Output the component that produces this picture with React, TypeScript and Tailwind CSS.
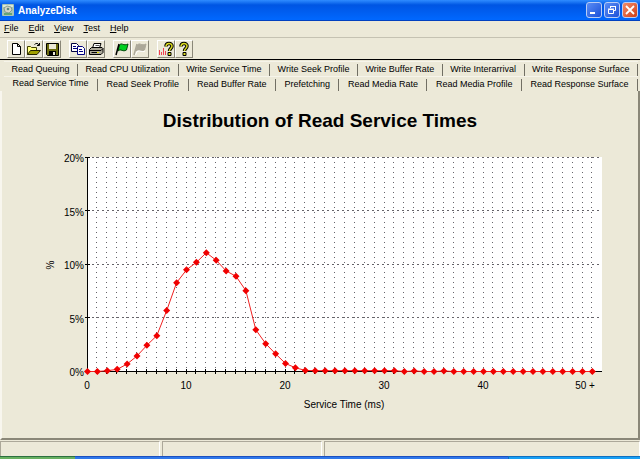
import type { ReactNode } from 'react'
import clsx from 'clsx'

const MENUS = ['File', 'Edit', 'View', 'Test', 'Help']

const BACK_TABS = [
  'Read Queuing',
  'Read CPU Utilization',
  'Write Service Time',
  'Write Seek Profile',
  'Write Buffer Rate',
  'Write Interarrival',
  'Write Response Surface',
]

const FRONT_TABS = [
  'Read Service Time',
  'Read Seek Profile',
  'Read Buffer Rate',
  'Prefetching',
  'Read Media Rate',
  'Read Media Profile',
  'Read Response Surface',
]

// Share of reads (%) per service time bucket, 1 ms each; the last one is "50 +"
const READ_TIMES = [
  0, 0, 0.08, 0.2, 0.7, 1.45, 2.45, 3.35, 5.7, 8.3, 9.5, 10.2, 11.1, 10.4, 9.4, 8.9, 7.55, 3.9, 2.6,
  1.65, 0.75, 0.35, 0.1, 0.08, 0.08, 0.08, 0.08, 0.08, 0.08, 0.08, 0.08, 0.08, 0, 0.05, 0, 0, 0.05, 0,
  0, 0, 0, 0, 0, 0, 0, 0, 0, 0, 0, 0, 0, 0,
]

/* Toolbar glyphs, all on a 16x16 grid */
const icons: Record<string, ReactNode> = {
  New: <path d="M4.500 2.500h5l3 3v8h-8zM9.500 2.500v3h3" fill="#fff" stroke="#000" />,
  Open: (
    <>
      <path d="M1.500 13.500v-8h3l1 1h5v3" fill="#ffff80" stroke="#404000" />
      <path d="M1.500 13.500l3-4h10l-3.500 4z" fill="#a0a000" stroke="#202000" />
      <path d="M8.500 3.500c1.500-1.500 3.500-1.500 4.500.5M13.500 2v2.500h-2.500" fill="none" stroke="#000" />
    </>
  ),
  Save: (
    <>
      <path d="M2.500 2.500h12v12h-11l-1-1z" fill="#6b6b10" stroke="#000" />
      <path d="M5 3h7v5H5z" fill="#ece9d8" />
      <path d="M5 10h7v4H5z" fill="#000" />
      <path d="M9 11h2v3H9z" fill="#ece9d8" />
    </>
  ),
  Copy: (
    <>
      <path d="M1.500 2.500h5l2 2v6h-7z" fill="#fff" stroke="#000040" />
      <path d="M3 5.500h3M3 7.500h4" stroke="#000080" />
      <path d="M7.500 5.500h5l2 2v6h-7z" fill="#fff" stroke="#000080" />
      <path d="M9 8.500h3M9 10.500h4" stroke="#000080" />
    </>
  ),
  Print: (
    <>
      <path d="M4.500 7l1.500-4.500h7l-1.500 4.500z" fill="#fff" stroke="#000" />
      <path d="M7.500 4.500h4" stroke="#555" />
      <path d="M1.500 8.500l2-2h10.500l1 1v4l-2 2h-11.500z" fill="#aca99a" stroke="#000" />
      <path d="M2 9.500h11l2-2M3.500 11.500h7" fill="none" stroke="#000" />
      <path d="M9 11.500h2" stroke="#e0e000" />
    </>
  ),
  Start: (
    <>
      <path d="M5.500 4c2-3 4 1.500 8.500-1l-1.500 6c-4 2.500-5.500-2-8.500 1z" fill="#00d020" stroke="#004808" />
      <path d="M5 3L2 14" stroke="#000" strokeWidth="1.500" />
    </>
  ),
  Stop: (
    <>
      <path d="M5.500 4c2-3 4 1.500 8.500-1l-1.500 6c-4 2.500-5.500-2-8.500 1z" fill="#aca899" stroke="#aca899" />
      <path d="M5 3L2 14" stroke="#aca899" strokeWidth="1.500" />
      <path d="M3.500 14L5 10.500c3-2 5 1.500 8-.5" fill="none" stroke="#fff" />
    </>
  ),
  'Explain chart': (
    <>
      <path d="M1.500 14V9M3.500 14v-3M5.500 14V7M7.500 14v-4" stroke="#f04050" />
      <path d="M8 5.500c0-4 6-4 6-.5 0 2.500-2.500 2.500-2.500 5" fill="none" stroke="#000" strokeWidth="3.500" />
      <path d="M8 5.500c0-4 6-4 6-.5 0 2.500-2.500 2.500-2.500 5" fill="none" stroke="#d8d820" strokeWidth="1.500" />
      <path d="M10 11.500h3v3h-3z" fill="#d8d820" stroke="#000" />
    </>
  ),
  Help: (
    <>
      <path d="M5 5.500c0-4 6-4 6-.5 0 2.500-2.500 2.500-2.500 5" fill="none" stroke="#000" strokeWidth="3.500" />
      <path d="M5 5.500c0-4 6-4 6-.5 0 2.500-2.500 2.500-2.500 5" fill="none" stroke="#d8d820" strokeWidth="1.500" />
      <path d="M7 11.500h3v3H7z" fill="#d8d820" stroke="#000" />
    </>
  ),
}

const TOOL_GROUPS = [['New', 'Open', 'Save'], ['Copy', 'Print'], ['Start', 'Stop'], ['Explain chart', 'Help']]

function TitleBar() {
  const button = 'flex size-4 items-center justify-center rounded-[3px] border border-[#b9cdf5]'
  return (
    <header className="flex h-[21px] items-center gap-1 border-b border-[#0040c0] bg-linear-to-b from-[#2f8cff] via-[#0055e3] via-25% to-[#0068ff] px-0.5">
      <svg className="size-3" viewBox="0 0 12 12">
        <rect width="12" height="12" rx="1" fill="#a9c4b4" />
        <path d="M1 1h10v2H1z" fill="#d9e8d8" />
        <path d="M2 4l3-2 4 1 1 3-3 3-4-1z" fill="#d5d5c8" stroke="#68897c" strokeWidth=".7" />
        <circle cx="6" cy="5" r="1.300" fill="#5b8a80" />
        <path d="M2 10h8" stroke="#4f9a62" strokeWidth="1.500" />
      </svg>
      <h1 className="grow text-[10px] font-bold text-white">AnalyzeDisk</h1>
      <div className="flex gap-0.5">
        <button aria-label="Minimize" className={clsx(button, 'bg-linear-to-br from-[#5a8cf5] to-[#1c50d8]')}>
          <svg className="size-3.5" viewBox="0 0 14 14">
            <path d="M3 10h5" stroke="#fff" strokeWidth="2" />
          </svg>
        </button>
        <button aria-label="Restore" className={clsx(button, 'bg-linear-to-br from-[#5a8cf5] to-[#1c50d8]')}>
          <svg className="size-3.5" viewBox="0 0 14 14" fill="none" stroke="#fff">
            <path d="M5.500 5V3.500h5v4H9M5 3.500h6M3.500 6.500h5v4h-5zM3 6h6" />
          </svg>
        </button>
        <button aria-label="Close" className={clsx(button, 'bg-linear-to-br from-[#f08a68] to-[#d03c10]')}>
          <svg className="size-3.5" viewBox="0 0 14 14">
            <path d="M3 3l8 8M11 3l-8 8" stroke="#fff" strokeWidth="1.800" />
          </svg>
        </button>
      </div>
    </header>
  )
}

function Toolbar() {
  return (
    <div className="flex h-[22px] items-center gap-2 border-b border-black pl-[7px]">
      {TOOL_GROUPS.map((group) => (
        <div key={group[0]} className="flex">
          {group.map((name) => (
            <button
              key={name}
              aria-label={name}
              disabled={name === 'Stop'}
              className="flex size-[18px] items-center justify-center border border-t-white border-r-[#8a8778] border-b-[#8a8778] border-l-white"
            >
              <svg className="size-4" viewBox="0 0 16 16">
                {icons[name]}
              </svg>
            </button>
          ))}
        </div>
      ))}
    </div>
  )
}

function TabRow({ tabs, active }: { tabs: string[]; active?: string }) {
  return (
    <div className="flex h-[15px] pr-0.5 pl-1">
      {tabs.map((tab) => (
        <button
          key={tab}
          role="tab"
          aria-selected={tab === active}
          className={clsx(
            'flex flex-auto justify-center border-t border-t-[#f6f4ea] whitespace-nowrap',
            tab === active ? 'items-start' : 'items-end',
          )}
        >
          <span className="grow">{tab}</span>
          <span className="h-3 self-end border-l border-[#716f64]" />
        </button>
      ))}
    </div>
  )
}

function Chart() {
  const x = (i: number) => 87 + i * 9.9
  const y = (v: number) => 371 - v * 10.7
  const points = READ_TIMES.map((v, i) => `${x(i)},${y(v)}`).join(' ')

  return (
    <svg className="block w-full" viewBox="2 147 636 270" fontSize="10" role="img" aria-label="Service time chart">
      <rect x="87" y="157" width="515" height="214" fill="#fff" />

      {/* Dotted grid */}
      <g stroke="#66646a" strokeDasharray="1 4" shapeRendering="crispEdges">
        {READ_TIMES.slice(1).map((_, i) => (
          <path key={i} d={`M${Math.floor(x(i + 1)) + 0.5} 157V371`} />
        ))}
        {[5, 10, 15, 20].map((v) => (
          <path key={v} d={`M87 ${Math.floor(y(v)) + 0.5}H602`} strokeDasharray="2 3" />
        ))}
      </g>

      {/* Axes and ticks */}
      <g stroke="#000" shapeRendering="crispEdges">
        <path d="M87.500 157V372M87 371.500H602" />
        {[0, 5, 10, 15, 20].map((v) => (
          <path key={v} d={`M85 ${Math.floor(y(v)) + 0.5}h5`} />
        ))}
        {READ_TIMES.map((_, i) => (
          <path key={i} d={`M${Math.floor(x(i)) + 0.5} 369v5`} />
        ))}
      </g>
      <g textAnchor="end">
        {[0, 5, 10, 15, 20].map((v) => (
          <text key={v} x="84" y={y(v) + 5}>
            {v}%
          </text>
        ))}
      </g>
      <g textAnchor="middle">
        {[0, 10, 20, 30, 40].map((v) => (
          <text key={v} x={x(v)} y="389">
            {v}
          </text>
        ))}
        <text x="585" y="389">
          50 +
        </text>
        <text x="344" y="408">
          Service Time (ms)
        </text>
        <text transform="translate(54 265) rotate(-90)">%</text>
      </g>

      <polyline points={points} fill="none" stroke="#f02020" transform="translate(.5 .5)" />
      {READ_TIMES.map((v, i) => (
        <path key={i} d={`M${x(i) + 0.5} ${y(v) - 3}l3.500 3.500l-3.500 3.500l-3.500 -3.500z`} fill="#f00000" />
      ))}
    </svg>
  )
}

export default function App() {
  return (
    <div className="flex min-h-screen flex-col bg-[#ece9d8] font-['Liberation_Sans',Arial,sans-serif] text-[9px] text-black">
      <TitleBar />

      <nav className="flex h-[17px] items-center gap-2.5 border-b border-[#c5c2b2] px-1">
        {MENUS.map((menu) => (
          <button key={menu}>
            <span className="underline">{menu[0]}</span>
            {menu.slice(1)}
          </button>
        ))}
      </nav>
      <Toolbar />

      <div role="tablist" className="pt-px">
        <TabRow tabs={BACK_TABS} />
        <TabRow tabs={FRONT_TABS} active="Read Service Time" />
      </div>

      <main className="grow border-r-2 border-b-2 border-l-2 border-r-[#8a8778] border-b-[#8a8778] border-l-[#f8f6ee]">
        <h2 className="pt-4 pb-3 text-center text-[19px] leading-7 font-bold">Distribution of Read Service Times</h2>
        <Chart />
      </main>

      {/* Status bar */}
      <footer className="flex h-4 gap-0.5 pt-px">
        <div className="w-40 border-t border-r border-l border-t-[#aca899] border-r-white border-l-[#aca899]" />
        <div className="w-40 border-t border-r border-l border-t-[#aca899] border-r-white border-l-[#aca899]" />
        <div className="grow border-t border-r border-l border-t-[#aca899] border-r-white border-l-[#aca899]" />
      </footer>

      {/* Top edge of the taskbar */}
      <div className="flex h-[3px]">
        <div className="w-[75px] border-t border-[#2c7040] bg-[#68b060]" />
        <div className="grow border-t border-[#1c50c0] bg-[#2f78ea]" />
        <div className="w-[132px] border-t border-l border-[#1070c0] bg-[#18a0f4]" />
      </div>
    </div>
  )
}
